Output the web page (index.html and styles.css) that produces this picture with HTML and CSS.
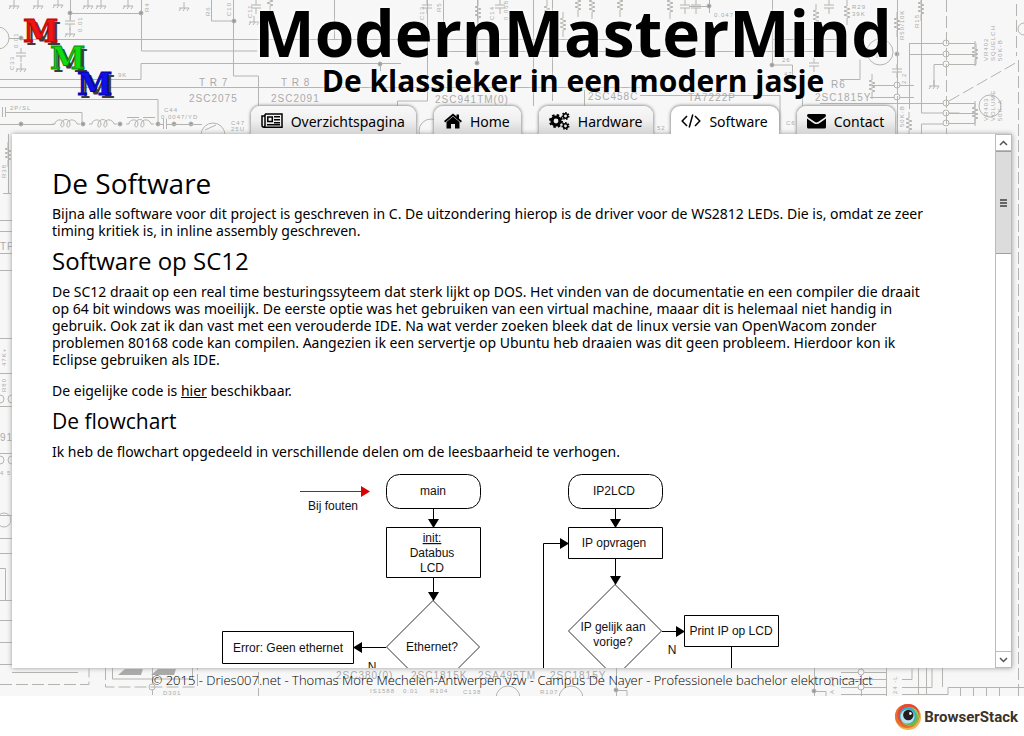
FILE: index.html
```html
<!DOCTYPE html>
<html lang="nl">
<head>
<meta charset="utf-8">
<title>ModernMasterMind</title>
<link rel="stylesheet" href="styles.css">
</head>
<body>
<div class="page">
  <svg class="backdrop" aria-hidden="true">
    <defs>
      <path id="res" d="M0 0v6l-3 1 6 2-6 2 6 2-6 2 6 2-3 1v7"/>
      <path id="gnd" d="M0 0v6M-5 6h10M-3 6l-2 3M1 6l-2 3M5 6l-2 3"/>
      <path id="cap" d="M0 0v5M-5 5h10M-5 8h10M0 8v6"/>
      <path id="coil" d="M0 0h3c0-5 9-6 9 0 0 4-4 4-3 0 1-6 9-6 9 0 0 4-4 4-3 0 1-6 9-5 10 0h3"/>
    </defs>
    <g class="wire">
      <path d="M9 38.500h12M21 39.500h236M257 39.500h370M70.500 0v20M70 13.500h71M141.500 0v51h116M0 79.500h141V63.500h260M233.500 0v76h25v30M0 87.500h640M0 99.500h158v25M6 112.500h76v12M0 124.500h54M211.500 0v21h23"/>
      <path d="M257 63.500h110M334.500 0v40M427.500 0v101h-30v5M380.500 65v6M443.500 0v22M477.500 0v62M440 51.500h400M533.500 0v106M552.500 0v101M640 95.500h140v35M584.500 90v17M709.500 0v13M709 6.500h-20M772.500 0v65h20v25M772 39.500h70M802.500 90v16M840 79.500h20v-20"/>
      <path d="M897.500 0v134M921.500 0v113h38M909 43.500h66M909.500 43v66M909 54.500h66M946 64.500h-12v22M946 64.500h30v-21M820 103.500h155v20h-29M946 113.500h29M921.500 134v-10h25M870 97.500h44M872 85.500h42M979.500 0M946 10.500"/>
      <path d="M0 338.500h12M0 373.500h12M0 406.500h12M0 453.500h12M0 515.500h12M0 538.500h12M0 553.500h12M0 568.500h5.500v32M0 600.500h12M0 620.500h12M0 642.500h12M0 664.500h12M8.500 134v60M0 220.500h12M0 231.500h12M0 253.500h12M3 193.500h8M0 270.500h12"/>
      <path d="M12 672.500h66M112.500 668v11h80v-11M152.500 668v16M152.500 690v5M616.500 668v28M616 690.500h11v6M814.500 668v28M814 691.500h12v5M841 672.500h45M841 679.500h45M841 687.500h45M841 694.500h45M861.500 668v28M886.500 668v28M902 679.500h10v-11M902 687.500h30v-19M902 694.500h46v-7h76M918.500 668v26M926.500 668v26M942.500 668v19M960.500 687v9M973.500 687v9M986.500 687v9M999.500 687v9"/>
      <circle cx="-2" cy="38" r="11"/><circle cx="213" cy="135" r="12"/><circle cx="431" cy="131" r="12"/><circle cx="880" cy="52" r="13"/><circle cx="990" cy="106" r="11"/><circle cx="1024" cy="29" r="6"/><circle cx="0" cy="399" r="4"/><circle cx="12" cy="399" r="4"/><circle cx="0" cy="460" r="4"/><circle cx="12" cy="460" r="4"/><circle cx="4" cy="520" r="7"/><circle cx="508" cy="698" r="12"/><circle cx="571" cy="698" r="12"/>
      <path d="M205 130l11-5M871 52l12-6M877 58v-12"/>
      <g class="node"><circle cx="946" cy="43" r="3"/><circle cx="946" cy="54" r="3"/><circle cx="946" cy="64" r="3"/><circle cx="946" cy="103" r="3"/><circle cx="946" cy="113" r="3"/><circle cx="946" cy="123" r="3"/><circle cx="897" cy="97" r="3"/><circle cx="897" cy="85" r="3"/><circle cx="152" cy="687" r="3"/><circle cx="861" cy="672" r="3"/><circle cx="861" cy="687" r="3"/></g>
      <g class="dot"><circle cx="21" cy="38" r="2"/><circle cx="70" cy="13" r="2"/><circle cx="141" cy="13" r="2"/><circle cx="83" cy="124" r="2"/><circle cx="120" cy="124" r="2"/><circle cx="158" cy="124" r="2"/><circle cx="174" cy="124" r="2"/><circle cx="191" cy="124" r="2"/><circle cx="21" cy="124" r="2"/><circle cx="234" cy="21" r="2"/><circle cx="477" cy="63" r="2"/><circle cx="380" cy="64" r="2"/><circle cx="897" cy="54" r="2"/><circle cx="772" cy="65" r="2"/><circle cx="709" cy="6" r="2"/><circle cx="616" cy="690" r="2"/><circle cx="814" cy="691" r="2"/></g>
      <path class="dash" d="M946.500 0v134M897.500 0v134M949 101l70-40M1018.500 60v636M1016.500 4v52M0 684.500h89v-16M105.500 668v19h92v-19M258.500 672v24M127 117.500h30"/>
      <use href="#gnd" x="14" y="0"/><use href="#gnd" x="38" y="0"/><use href="#gnd" x="58" y="-1"/><use href="#gnd" x="88" y="0"/><use href="#gnd" x="101" y="0"/><use href="#gnd" x="128" y="0"/><use href="#gnd" x="184" y="2"/><use href="#cap" x="70" y="16"/><use href="#gnd" x="70" y="28"/><use href="#cap" x="21" y="48"/><use href="#gnd" x="21" y="63"/><use href="#gnd" x="254" y="16"/><use href="#gnd" x="934" y="80"/>
      <use href="#cap" x="256" y="0"/><use href="#cap" x="427" y="0"/><use href="#res" x="478" y="0"/><use href="#res" x="270" y="-12"/><use href="#res" x="547" y="0"/><use href="#res" x="563" y="12"/><use href="#res" x="578" y="-8"/><use href="#res" x="592" y="-6"/><use href="#res" x="620" y="-8"/><use href="#res" x="670" y="-6"/><use href="#res" x="816" y="4"/><use href="#res" x="847" y="0"/><use href="#res" x="897" y="12"/><use href="#res" x="921" y="-4"/><use href="#res" x="872" y="74"/><use href="#res" x="975" y="41"/><use href="#res" x="975" y="101"/><use href="#res" x="909" y="112"/><use href="#res" x="8" y="142"/><use href="#cap" x="897" y="64"/><use href="#cap" x="685" y="0"/><use href="#cap" x="696" y="0"/><use href="#cap" x="500" y="0"/><use href="#cap" x="829" y="0"/><use href="#cap" x="814" y="58"/>
      <use href="#coil" x="52" y="124"/><use href="#coil" x="89" y="124"/><use href="#coil" x="126" y="124"/><path d="M158 124.500h5M163.500 119v10M166.500 119v10M166 124.500h36M5.500 107v10M2.500 107v10"/>
    </g>
    <g class="plate"><path d="M118 675l7-6h18l-2 6zM151 675l7-6h18l-2 6z"/></g>
    <g class="mark big">
      <text x="199" y="86">T R 7</text><text x="189" y="102">2SC2075</text><text x="281" y="86">T R 8</text><text x="271" y="102">2SC2091</text><text x="435" y="103">2SC941TM(0)</text><text x="588" y="100">2SC458C</text><text x="688" y="101">TA7222P</text><text x="815" y="101">2SC1815Y</text><text x="831" y="88">R6</text><text x="0" y="250">TP</text><text x="0" y="441">91</text><text x="336" y="679">2SC380(0)</text><text x="411" y="679">2SC1815K</text><text x="478" y="679">2SA495TM</text><text x="550" y="679">2SC1815Y</text>
    </g>
    <g class="mark">
      <text x="10" y="110">2P/SL</text><text x="164" y="112">C44</text><text x="161" y="119">0.0047/YD</text><text x="231" y="125">C47</text><text x="231" y="131">25U</text><text x="118" y="77">9K</text><text x="714" y="17">0.047</text><text x="657" y="130">52</text><text x="786" y="125">C67</text><text x="852" y="9">R29</text><text x="852" y="16">39K</text><text x="163" y="695">D301</text><text x="370" y="693">IS1588</text><text x="403" y="693">0.01</text><text x="430" y="693">R104</text><text x="463" y="694">C138</text><text x="540" y="694">R107</text><text x="782" y="62">26</text><text x="784" y="76">47</text><text x="0" y="475">4 5</text>
      <text transform="translate(18 48) rotate(-90)">0.01</text><text transform="translate(14 70) rotate(-90)">C33</text><text transform="translate(82 32) rotate(-90)">0.01</text><text transform="translate(149 12) rotate(-90)">R4</text><text transform="translate(210 16) rotate(-90)">R6</text><text transform="translate(231 16) rotate(-90)">C10</text><text transform="translate(252 18) rotate(-90)">C11</text><text transform="translate(424 20) rotate(-90)">C13</text><text transform="translate(441 12) rotate(-90)">R5</text><text transform="translate(494 20) rotate(-90)">C14</text><text transform="translate(508 20) rotate(-90)">0.068</text><text transform="translate(904 40) rotate(-90)">R50/10K</text><text transform="translate(919 28) rotate(-90)">R15</text><text transform="translate(906 84) rotate(-90)">2.2</text><text transform="translate(904 127) rotate(-90)">50K-B</text><text transform="translate(988 61) rotate(-90)">VR402</text><text transform="translate(995 61) rotate(-90)">SQUELCH</text><text transform="translate(1002 61) rotate(-90)">50K-B</text><text transform="translate(988 121) rotate(-90)">VR403</text><text transform="translate(995 121) rotate(-90)">VOLUME</text><text transform="translate(1002 121) rotate(-90)">50K-A</text><text transform="translate(6 178) rotate(-90)">R38</text><text transform="translate(6 392) rotate(-90)">R80</text><text transform="translate(6 366) rotate(-90)">47K+</text><text transform="translate(834 694) rotate(-90)">A 2 4</text><text transform="translate(897 694) rotate(-90)">24 -L</text>
    </g>
  </svg>

  <header class="header">
    <svg class="logo" viewBox="0 0 100 84" role="img" aria-label="MMM">
      <g class="logo-shadow"><text x="2" y="27">M</text><text x="29" y="54">M</text><text x="56" y="80">M</text></g>
      <text class="red" x="-1" y="24">M</text><text class="green" x="26" y="51">M</text><text class="blue" x="53" y="77">M</text>
    </svg>
    <h1 class="title">ModernMasterMind</h1>
    <p class="tagline">De klassieker in een modern jasje</p>
  </header>

  <nav class="tabs">
    <a class="tab" href="#overzicht"><svg width="22" height="16" viewBox="0 0 22 16"><path fill="none" stroke="#000" stroke-width="1.500" d="M4 1h17v13.200H3q-2 0-2-2V3h3M4 1v11q0 2-1.500 2"/><path fill="none" stroke="#000" stroke-width="1.500" d="M6.800 4h4.500v4.500H6.800z"/><path d="M13 3h6v1.500h-6zM13 6h6v1.500h-6zM13 9h6v1.500h-6zM6 11h13v1.500H6z"/></svg>Overzichtspagina</a>
    <a class="tab" href="#home"><svg width="18" height="16" viewBox="0 0 18 16"><path d="M9 3.500L15.500 9v6.500H11V11H7v4.500H2.500V9z"/><path fill="none" stroke="#000" stroke-width="1.800" d="M.6 8.700L9 1.700l8.400 7"/><path d="M12.500 1.500H15v5l-2.500-2z"/></svg>Home</a>
    <a class="tab" href="#hardware"><svg width="21" height="18" viewBox="0 0 21 18"><g fill="none" stroke="#000"><circle cx="7" cy="9" r="4" stroke-width="3.200"/><circle cx="7" cy="9" r="6" stroke-width="2" stroke-dasharray="2.500 2.212"/><circle cx="16.500" cy="4" r="2.200" stroke-width="1.500"/><circle cx="16.500" cy="4" r="3.300" stroke-width="1.400" stroke-dasharray="1.500 1.462"/><circle cx="16.500" cy="14" r="2.200" stroke-width="1.500"/><circle cx="16.500" cy="14" r="3.300" stroke-width="1.400" stroke-dasharray="1.500 1.462"/></g></svg>Hardware</a>
    <a class="tab active" href="#software" aria-current="page"><svg width="20" height="16" viewBox="0 0 20 16"><path fill="none" stroke="#000" stroke-width="1.500" d="M6 3L1.200 8 6 13M14 3l4.800 5L14 13M11.800 1.500l-3.600 13"/></svg>Software</a>
    <a class="tab" href="#contact"><svg width="19" height="16" viewBox="0 0 19 16"><path d="M1.500 1h16q1.500 0 1.500 1.500-.3 1.500-2 2.600l-6 4q-1.500.8-3 0l-6-4Q.3 4 0 2.500 0 1 1.500 1z"/><path d="M0 5.500q3 2.300 7 4.900 2.500 1.300 5 0 4-2.600 7-4.900V14q0 1.500-1.500 1.500h-16Q0 15.500 0 14z"/></svg>Contact</a>
  </nav>

  <div class="panel">
    <main class="content">
      <h2>De Software</h2>
      <p>Bijna alle software voor dit project is geschreven in C. De uitzondering hierop is de driver voor de WS2812 LEDs. Die is, omdat ze zeer<br>timing kritiek is, in inline assembly geschreven.</p>
      <h3>Software op SC12</h3>
      <p>De SC12 draait op een real time besturingssyteem dat sterk lijkt op DOS. Het vinden van de documentatie en een compiler die draait<br>op 64 bit windows was moeilijk. De eerste optie was het gebruiken van een virtual machine, maaar dit is helemaal niet handig in<br>gebruik. Ook zat ik dan vast met een verouderde IDE. Na wat verder zoeken bleek dat de linux versie van OpenWacom zonder<br>problemen 80168 code kan compilen. Aangezien ik een servertje op Ubuntu heb draaien was dit geen probleem. Hierdoor kon ik<br>Eclipse gebruiken als IDE.</p>
      <p>De eigelijke code is <a href="#code">hier</a> beschikbaar.</p>
      <h4>De flowchart</h4>
      <p>Ik heb de flowchart opgedeeld in verschillende delen om de leesbaarheid te verhogen.</p>
      <svg class="chart" width="563" height="240" viewBox="222 474 563 240">
        <g class="shape">
          <rect x="386.500" y="474.500" width="94" height="34" rx="13"/>
          <rect x="568.500" y="474.500" width="94" height="34" rx="13"/>
          <path d="M386.500 527.500h94v50h-94zM568.500 527.500h94v31h-94zM222.500 631.500h131v32h-131zM684.500 615.500h94v31h-94z"/>
          <path d="M433.500 508v12M433.500 577v18M615.500 508v12M615.500 558v18M386 647.500h-24M662 631.500h14M731.500 647v67M560 543.500h-16.500V714"/>
        </g>
        <path class="diamond" d="M433 600.500l46.500 46.500-46.500 46.500L386.500 647zM615 584.500l46.500 46.500-46.500 46.500L568.500 631z"/>
        <path d="M428 519h11l-5.500 9zM428 592h11l-5.500 9zM610 519h11l-5.500 9zM610 576h11l-5.500 9zM362 642v11l-9-5.500zM676 626v11l9-5.500zM560 538v11l9-5.500z"/>
        <path class="fault" d="M300 491.500h62"/><path fill="#d00" d="M361 486v11l9-5.500z"/>
        <g class="label">
          <text x="333" y="510">Bij fouten</text><text x="433" y="495">main</text><text x="432" y="542" text-decoration="underline">init:</text><text x="432" y="557">Databus</text><text x="432" y="572">LCD</text><text x="432" y="651">Ethernet?</text><text x="288" y="652">Error: Geen ethernet</text><text x="372" y="671">N</text><text x="614" y="495">IP2LCD</text><text x="614" y="547">IP opvragen</text><text x="613" y="631">IP gelijk aan</text><text x="613" y="646">vorige?</text><text x="672" y="654">N</text><text x="731" y="635">Print IP op LCD</text>
        </g>
      </svg>
    </main>
    <div class="scrollbar">
      <button class="step" aria-label="Omhoog"><svg width="9" height="6" viewBox="0 0 9 6"><path d="M1 5l3.500-3.500L8 5"/></svg></button>
      <div class="track"><div class="thumb"><i></i><i></i><i></i></div></div>
      <button class="step" aria-label="Omlaag"><svg width="9" height="6" viewBox="0 0 9 6"><path d="M1 1l3.500 3.500L8 1"/></svg></button>
    </div>
  </div>
  <footer class="footer">© 2015 - Dries007.net - Thomas More Mechelen-Antwerpen vzw - Campus De Nayer - Professionele bachelor elektronica-ict</footer>
</div>
<div class="sponsor">
  <svg width="26" height="26" viewBox="0 0 26 26" aria-hidden="true"><circle cx="13" cy="13" r="13" fill="#f4b14f"/><circle cx="12" cy="12" r="12" fill="#e66f32"/><circle cx="13.500" cy="11" r="11" fill="#e4493b"/><circle cx="14.500" cy="12.500" r="9.500" fill="#97c95c"/><circle cx="15.500" cy="14" r="7.500" fill="#6fb74d"/><circle cx="13" cy="11.500" r="8.200" fill="#29b1d3"/><circle cx="12.500" cy="12.500" r="7" fill="#b9e3ef"/><circle cx="13.300" cy="11" r="5.200" fill="#231f20"/><path fill="#fff" d="M14 8.500q2-1.500 3 1-1 2-2.500 1.200z"/></svg>
  <span>BrowserStack</span>
</div>
</body>
</html>
```

FILE: styles.css
```css
* { box-sizing: border-box; }

body {
  margin: 0;
  height: 100vh;
  display: flex;
  flex-direction: column;
  overflow: hidden;
  background: #fff;
  color: #000;
  font: 14px/17px "Noto Sans", "Open Sans", sans-serif;
}

.page {
  position: relative;
  flex: 1;
  min-height: 0;
  display: flex;
  flex-direction: column;
  overflow: hidden;
  background: #f7f7f7;
}

/* schematic drawing behind the whole page */
.backdrop {
  position: absolute;
  inset: 0;
  width: 100%;
  height: 100%;
}
.wire { fill: none; stroke: #b4b4b0; stroke-width: 1; }
.node { fill: #f7f7f7; }
.dot { fill: #999; }
.dash { stroke-dasharray: 12 4; }
.plate { fill: #aaa; }
.mark { fill: #aaa; font: 6px "Liberation Sans", sans-serif; letter-spacing: 1px; }
.big { font-size: 10px; }

.header {
  position: relative;
  display: grid;
  justify-items: center;
  padding: 0 0 7px 122px;
}
.logo {
  position: absolute;
  left: 24px;
  top: 18px;
  width: 100px;
  height: 84px;
  overflow: visible;
  font: bold 32px "DejaVu Serif", serif;
}
.logo-shadow { fill: #3c3c3c; }
.red { fill: #f01414; stroke: #b00; }
.green { fill: #10dc10; stroke: #0a8a0a; }
.blue { fill: #1010e8; stroke: #0000a8; }

.title,
.tagline {
  margin: 0;
  font-family: "Open Sans", sans-serif;
  font-weight: 700;
  text-shadow: 0 0 5px #fff;
}
.title { font-size: 64px; line-height: 66px; }
.tagline { font-size: 30px; line-height: 33px; margin-top: -2px; padding-bottom: 2px; }

.tabs {
  position: relative;
  z-index: 1;
  display: flex;
  justify-content: center;
  gap: 18px;
  padding-left: 122px;
  clip-path: inset(-8px 0 0 0);
}
.tab {
  display: flex;
  align-items: center;
  gap: 8px;
  height: 28px;
  padding: 2px 11px 0 10px;
  border-radius: 9px 9px 0 0;
  background: linear-gradient(#f8f8f8, #f0f0f0 50%, #d4d4d4);
  box-shadow: 0 0 3px 1px #999;
  color: #000;
  text-decoration: none;
}
.tab.active { background: #fff; }

.panel {
  position: relative;
  flex: 1;
  min-height: 0;
  display: flex;
  margin: 0 12px;
  background: #fff;
  box-shadow: 0 0 5px #999;
}

.content {
  flex: 1;
  min-width: 0;
  overflow: hidden;
  padding: 31px 40px 0;
}
.content h2, .content h3, .content h4 {
  margin: 0;
  font-family: "Open Sans", sans-serif;
  font-weight: 400;
}
.content h2 { font-size: 28px; line-height: 36px; margin-bottom: 4px; }
.content h3 { font-size: 24px; line-height: 30px; margin: -7px 0 7px; }
.content h4 { font-size: 21px; line-height: 28px; margin: -6px 0 8px; }
.content p { margin: 0 0 14px; }
.content a { color: #000; }
.chart { display: block; margin: 0 auto; }
.shape { fill: #fff; stroke: #000; }
.shape path { fill: none; }
.diamond { fill: #fff; stroke: #333; stroke-width: 1; }
.fault { stroke: #e00000; }
.label { font: 12px "Liberation Sans", sans-serif; fill: #111; text-anchor: middle; }

.scrollbar {
  width: 17px;
  display: flex;
  flex-direction: column;
  background: #fff;
  border-left: 1px solid #bbb;
}
.step {
  height: 17px;
  padding: 0;
  display: grid;
  place-items: center;
  border: 1px solid #bbb;
  border-left: 0;
  background: #fff;
}
.step path { fill: none; stroke: #555; stroke-width: 1.5; }
.track { flex: 1; border-right: 1px solid #bbb; }
.thumb {
  height: 103px;
  display: flex;
  flex-direction: column;
  align-items: center;
  justify-content: center;
  gap: 1px;
  background: #dcdcdc;
  border: 1px solid #a0a0a0;
  border-left: 0;
  border-right: 0;
}
.thumb i { width: 7px; height: 2px; background: #666; }

.footer {
  position: relative;
  padding: 4px 0 7px;
  text-align: center;
  font-family: "Open Sans", sans-serif;
  font-size: 13px;
  font-weight: 300;
}

.sponsor {
  height: 40px;
  padding: 2px 6px 0 0;
  display: flex;
  align-items: center;
  justify-content: flex-end;
  gap: 3px;
  color: #3b3229;
  font: bold 15px Roboto, sans-serif;
}
```
